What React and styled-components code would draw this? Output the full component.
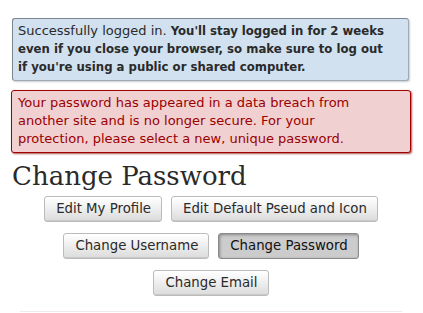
import React from "react";
import styled, { createGlobalStyle } from "styled-components";

const Global = createGlobalStyle`
  html, body {
    margin: 0;
    padding: 0;
    background: #fff;
  }
  body {
    font-family: "DejaVu Sans", "Liberation Sans", sans-serif;
    color: #2a2a2a;
  }
`;

const Page = styled.div`
  padding: 18px 12px 0 11px;
  width: 400px;
`;

const Notice = styled.div`
  background: #d1e1ef;
  border: 1px solid #a0a8b0;
  border-top-color: #7b8590;
  border-left-color: #7b8590;
  border-radius: 3px;
  box-shadow: 1px 1px 2px #c8ccd2;
  margin: 0 2px 0 1px;
  padding: 3px 16px 4px 5px;
  font-size: 13px;
  line-height: 18px;
  color: #2a2a2a;

  strong {
    font-family: "DejaVu Sans Condensed", "DejaVu Sans", sans-serif;
    font-stretch: condensed;
    font-weight: bold;
  }
`;

const ErrorBox = styled.div`
  background: #f1d0d2;
  border: 1px solid #a10000;
  border-radius: 3px;
  box-shadow: 1px 1px 2px #a55;
  margin-top: 9px;
  padding: 3px 24px 4px 6px;
  font-size: 13px;
  line-height: 18px;
  color: #900;
`;

const Heading = styled.h2`
  font-family: "DejaVu Serif", Georgia, serif;
  font-weight: normal;
  font-size: 26px;
  line-height: 30px;
  color: #2a2a2a;
  margin: 8px 0 0 1px;
`;

const Nav = styled.ul`
  list-style: none;
  margin: 5px 0 0;
  padding: 0;
  display: flex;
  flex-direction: column;
  gap: 11px;
`;

const Row = styled.li`
  display: flex;
  justify-content: center;
  gap: 9px;
`;

const Button = styled.a`
  display: inline-block;
  box-sizing: border-box;
  height: 26px;
  padding: 0 10px 0 11px;
  font-size: 13.3px;
  line-height: 24px;
  color: ${(p) => (p.$current ? "#111" : "#2a2a2a")};
  border: 1px solid ${(p) => (p.$current ? "#8a8a8a" : "#bbb")};
  border-radius: 3px;
  background: ${(p) =>
    p.$current ? "#ccc" : "linear-gradient(#fff 2%, #ddd 95%, #bbb 100%)"};
  box-shadow: ${(p) => (p.$current ? "inset 1px 1px 3px #888" : "none")};
  text-decoration: none;
`;

const Divider = styled.hr`
  border: 0;
  border-top: 1px solid #f0ebe8;
  margin: 15px 9px 0 9px;
`;

export default function App() {
  return (
    <>
      <Global />
      <Page>
        <Notice>
          Successfully logged in.{" "}
          <strong>
            You'll stay logged in for 2 weeks even if you close your browser,
            so make sure to log out if you're using a public or shared
            computer.
          </strong>
        </Notice>
        <ErrorBox>
          Your password has appeared in a data breach from another site and is
          no longer secure. For your protection, please select a new, unique
          password.
        </ErrorBox>
        <Heading>Change Password</Heading>
        <Nav>
          <Row>
            <Button href="#">Edit My Profile</Button>
            <Button href="#">Edit Default Pseud and Icon</Button>
          </Row>
          <Row>
            <Button href="#">Change Username</Button>
            <Button href="#" $current>
              Change Password
            </Button>
          </Row>
          <Row>
            <Button href="#">Change Email</Button>
          </Row>
        </Nav>
        <Divider />
      </Page>
    </>
  );
}
